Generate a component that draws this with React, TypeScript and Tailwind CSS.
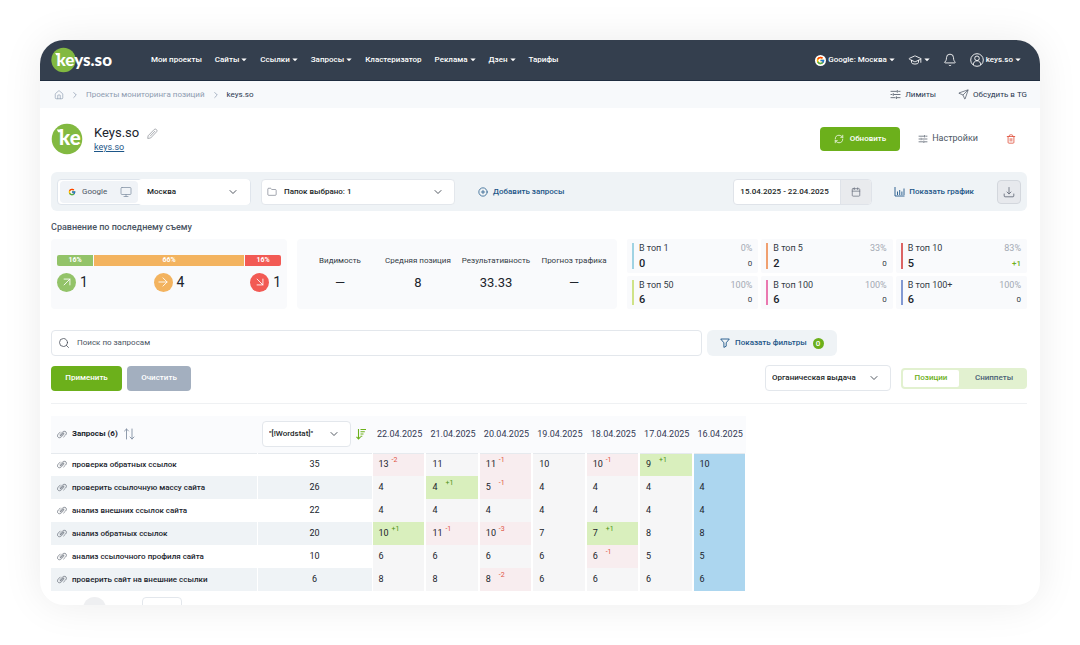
import type { ReactNode } from "react";
import { FcGoogle } from "react-icons/fc";
import {
  ArrowDownRight,
  ArrowRight,
  ArrowUpRight,
  Bell,
  Calendar,
  ChevronDown,
  ChevronRight,
  CirclePlus,
  Folder,
  GraduationCap,
  Home,
  Monitor,
  RefreshCw,
  Search,
  Send,
  Trash2,
} from "lucide-react";

const navItems = [
  { label: "Мои проекты", menu: false },
  { label: "Сайты", menu: true },
  { label: "Ссылки", menu: true },
  { label: "Запросы", menu: true },
  { label: "Кластеризатор", menu: false },
  { label: "Реклама", menu: true },
  { label: "Дзен", menu: true },
  { label: "Тарифы", menu: false },
];

const metrics = [
  { label: "Видимость", value: "—" },
  { label: "Средняя позиция", value: "8" },
  { label: "Результативность", value: "33.33" },
  { label: "Прогноз трафика", value: "—" },
];

const tops = [
  { label: "В топ 1", value: 0, percent: "0%", diff: "0", color: "bg-[#9fd3e3]" },
  { label: "В топ 5", value: 2, percent: "33%", diff: "0", color: "bg-[#f0a070]" },
  { label: "В топ 10", value: 5, percent: "83%", diff: "+1", color: "bg-[#dc6464]" },
  { label: "В топ 50", value: 6, percent: "100%", diff: "0", color: "bg-[#cfe388]" },
  { label: "В топ 100", value: 6, percent: "100%", diff: "0", color: "bg-[#ea78b0]" },
  { label: "В топ 100+", value: 6, percent: "100%", diff: "0", color: "bg-[#8299d3]" },
];

const dates = ["22.04.2025", "21.04.2025", "20.04.2025", "19.04.2025", "18.04.2025", "17.04.2025", "16.04.2025"];

type Cell = [number, number?];

const rows: { query: string; freq: number; cells: Cell[] }[] = [
  { query: "проверка обратных ссылок", freq: 35, cells: [[13, -2], [11], [11, -1], [10], [10, -1], [9, 1], [10]] },
  { query: "проверить ссылочную массу сайта", freq: 26, cells: [[4], [4, 1], [5, -1], [4], [4], [4], [4]] },
  { query: "анализ внешних ссылок сайта", freq: 22, cells: [[4], [4], [4], [4], [4], [4], [4]] },
  { query: "анализ обратных ссылок", freq: 20, cells: [[10, 1], [11, -1], [10, -3], [7], [7, 1], [8], [8]] },
  { query: "анализ ссылочного профиля сайта", freq: 10, cells: [[6], [6], [6], [6], [6, -1], [5], [5]] },
  { query: "проверить сайт на внешние ссылки", freq: 6, cells: [[8], [8], [8, -2], [6], [6], [6], [6]] },
];

function cellColor([, diff]: Cell, last: boolean) {
  if (last) return "bg-[#acd6ef]";
  if (!diff) return "bg-[#f6f6f7]";
  return diff > 0 ? "bg-[#d9efbd]" : "bg-[#f8edef]";
}

function Caret() {
  return (
    <svg viewBox="0 0 6 4" className="h-1 w-1.5 shrink-0" fill="currentColor">
      <path d="M0.3 0.5h5.4L3 3.3z" />
    </svg>
  );
}

function Sliders({ className }: { className: string }) {
  return (
    <svg viewBox="0 0 12 10" className={className} fill="none" stroke="currentColor" strokeWidth="0.9">
      <path d="M0.5 1.5h7M9 1.5h2.5M0.5 5h2M4 5h7.5M0.5 8.5h5.5M7.5 8.5h4" />
      <path d="M8 0v3M3.5 3.5v3M7 7v3" />
    </svg>
  );
}

function ClipIcon() {
  return (
    <svg viewBox="0 0 12 10" className="h-[9px] w-2.5 shrink-0" fill="none" stroke="#5c6470" strokeWidth="0.8" strokeLinecap="round">
      <path d="M7.6 3.1L5 5.9c-.9 1-2 .1-1.2-.8l2.7-3C8.6.2 11.2 1.1 11.3 3.4c0 .9-.4 1.5-1 2.2L8 7.9" />
      <path d="M4.3 6.8l2.7-2.9c.9-1 2-.1 1.2.8l-2.8 3C3.3 9.8.7 8.9.6 6.6c0-.9.4-1.5 1-2.2L3.9 2.1" />
    </svg>
  );
}

function LogoMark() {
  return (
    <svg viewBox="0 0 32 32" className="h-8 w-8 shrink-0" role="img" aria-label="Keys.so">
      <defs>
        <clipPath id="mark">
          <circle cx="16" cy="16" r="15.3" />
        </clipPath>
      </defs>
      <circle cx="16" cy="16" r="15.3" fill="#82b941" />
      <g clipPath="url(#mark)" fill="#fff">
        <path d="M5.8 6.4h5v2.800H7.2z" />
        <text x="8" y="21.500" fontFamily="Lato, sans-serif" fontWeight="900" fontSize="20.500">ke</text>
      </g>
    </svg>
  );
}

function Logo() {
  return (
    <svg viewBox="0 0 64 26" className="h-[26px] w-16 shrink-0" role="img" aria-label="keys.so">
      <circle cx="12.5" cy="13" r="12.2" fill="#82b941" />
      <path d="M4.2 6h4v2.200H5.200z" fill="#fff" />
      <text x="5.500" y="18.500" fill="#fff" fontFamily="Lato, sans-serif" fontWeight="900" fontSize="17">keys.so</text>
    </svg>
  );
}

function Select({ label, value, className }: { label: string; value: string; className: string }) {
  return (
    <div className={`relative flex h-[26px] items-center rounded border border-[#e3e7ec] bg-white ${className}`}>
      <select aria-label={label} className="h-full w-full appearance-none bg-transparent pr-6 text-[8px] font-medium text-[#1b1f27] outline-none">
        <option>{value}</option>
      </select>
      <ChevronDown className="pointer-events-none absolute right-2.5 size-3 text-[#3f4650]" strokeWidth={1.8} />
    </div>
  );
}

function Trend({ value, color, children }: { value: number; color: string; children: ReactNode }) {
  return (
    <div className="flex items-center gap-1 text-sm text-[#20242c]">
      <span className={`flex size-[19px] items-center justify-center rounded-full text-white ${color}`}>{children}</span>
      {value}
    </div>
  );
}

function Header() {
  return (
    <header className="flex h-[41px] items-center border-b border-[#1f2d3f] bg-[#343f4e] pr-[19px] pl-[11px] text-[8px] font-medium text-white">
      <Logo />
      <nav className="ml-9 flex items-center gap-[13px]">
        {navItems.map((item) => (
          <a key={item.label} href="#" className="flex items-center gap-0.5 whitespace-nowrap">
            {item.label}
            {item.menu && <Caret />}
          </a>
        ))}
      </nav>
      <div className="ml-auto flex items-center gap-[13px]">
        <button className="flex items-center gap-0.5 whitespace-nowrap">
          <span className="rounded-full bg-white p-px">
            <FcGoogle className="size-[9px]" />
          </span>
          Google: Москва
          <Caret />
        </button>
        <button aria-label="Обучение" className="flex items-center gap-0.5">
          <GraduationCap className="size-3.5" strokeWidth={1.5} />
          <Caret />
        </button>
        <button aria-label="Уведомления">
          <Bell className="size-3.5" strokeWidth={1.5} />
        </button>
        <button className="flex items-center gap-0.5">
          <svg viewBox="0 0 14 14" className="size-3.5" fill="none" stroke="currentColor" strokeWidth="0.9">
            <circle cx="7" cy="7" r="6.3" />
            <circle cx="7" cy="5.3" r="2.3" />
            <path d="M3.3 12c0-2.7 1.5-4.2 3.7-4.2s3.7 1.5 3.7 4.2" />
          </svg>
          keys.so
          <Caret />
        </button>
      </div>
    </header>
  );
}

function Breadcrumbs() {
  return (
    <div className="flex h-[27px] items-center bg-[#f7f9fb] pr-[13px] pl-3.5 text-[8px]">
      <nav className="flex items-center gap-1.5 text-[#8d9bb0]">
        <a href="#" aria-label="Главная">
          <Home className="size-2.5" strokeWidth={1.6} />
        </a>
        <ChevronRight className="size-2.5" strokeWidth={1.8} />
        <a href="#">Проекты мониторинга позиций</a>
        <ChevronRight className="size-2.5" strokeWidth={1.8} />
        <span className="text-[#2a3850]">keys.so</span>
      </nav>
      <div className="ml-auto flex items-center gap-[22px] text-[#2a3850]">
        <a href="#" className="flex items-center gap-1">
          <Sliders className="h-[9px] w-[11px] text-[#4b5563]" />
          Лимиты
        </a>
        <a href="#" className="flex items-center gap-1">
          <Send className="size-[11px] text-[#4b5563]" strokeWidth={1.6} />
          Обсудить в TG
        </a>
      </div>
    </div>
  );
}

function Title() {
  return (
    <div className="flex h-16 items-center pr-2 pb-0.5 pl-[11px]">
      <LogoMark />
      <div className="ml-[11px]">
        <div className="flex items-center gap-2">
          <h1 className="text-[13px] leading-4 text-[#20242c]">Keys.so</h1>
          <button aria-label="Переименовать">
            <svg viewBox="0 0 12 12" className="size-[11px] text-[#8b8f96]" fill="none" stroke="currentColor" strokeWidth="0.8" strokeLinejoin="round">
              <path d="M1.2 8.5l6.8-7c1.3-1.2 3.9 1 2.6 2.5L4 10.9l-3.2.5zM3.3 9l5.5-5.7" />
            </svg>
          </button>
        </div>
        <a href="#" className="block text-[9px] leading-3 text-[#1d5688] underline">keys.so</a>
      </div>
      <div className="ml-auto flex items-center text-[9px]">
        <button className="flex h-6 items-center gap-1.5 rounded bg-[#6cb01b] px-3.5 text-[8px] font-medium text-white">
          <RefreshCw className="size-2.5" strokeWidth={1.8} />
          Обновить
        </button>
        <button className="ml-[18px] flex items-center gap-1 text-[#4b5563]">
          <Sliders className="h-2 w-2.5" />
          Настройки
        </button>
        <button aria-label="Удалить" className="mr-4 ml-7">
          <Trash2 className="size-2.5 text-[#e0533f]" strokeWidth={2} />
        </button>
      </div>
    </div>
  );
}

function Toolbar() {
  return (
    <div className="flex h-[39px] items-center rounded-md bg-[#eff3f6] px-1.5 text-[8px]">
      <div className="flex h-[26px] w-[194px] items-center rounded border border-[#dfe5ec] bg-white pl-0.5">
        <span className="flex h-[22px] w-[78px] items-center rounded bg-[#f0f3f7] pr-1.5 pl-2 text-[#4b5563]">
          <FcGoogle className="size-2" />
          <span className="ml-1.5">Google</span>
          <Monitor className="ml-auto size-3 text-[#8290a3]" strokeWidth={1.5} />
        </span>
        <Select label="Регион" value="Москва" className="flex-1 border-transparent bg-transparent pl-2" />
      </div>
      <div className="relative ml-2.5 w-[194px]">
        <Folder className="pointer-events-none absolute top-2 left-1.5 z-10 size-2.5 text-[#6b7280]" strokeWidth={1.5} />
        <Select label="Папки" value="Папок выбрано: 1" className="pl-[22px]" />
      </div>
      <button className="ml-[23px] flex items-center gap-[5px] font-medium text-[#1d5688]">
        <CirclePlus className="size-2.5" strokeWidth={1.8} />
        Добавить запросы
      </button>
      <div className="ml-auto flex h-[26px] w-[139px] overflow-hidden rounded border border-[#dfe3e9] bg-white">
        <input aria-label="Период" defaultValue="15.04.2025 - 22.04.2025" className="w-[106px] pl-1.5 font-medium text-[#1b1f27] outline-none" />
        <button aria-label="Открыть календарь" className="flex flex-1 items-center justify-center border-l border-[#dfe3e9] bg-[#e9ebee] text-[#6b7280]">
          <Calendar className="size-2.5" strokeWidth={1.8} />
        </button>
      </div>
      <button className="ml-[22px] flex items-center gap-1 font-medium text-[#1d5688]">
        <svg viewBox="0 0 11 11" className="size-[11px]" fill="none" stroke="currentColor" strokeWidth="0.9">
          <path d="M1 1v9h9.5M3.5 9V5.5M5.7 9V4M7.9 9V5.5M10 9V2.5" />
        </svg>
        Показать график
      </button>
      <button aria-label="Скачать" className="ml-[23px] flex size-6 items-center justify-center rounded border border-[#d3d7dd] bg-[#e7e9ed] text-[#6b7280]">
        <svg viewBox="0 0 12 12" className="size-3" fill="none" stroke="currentColor" strokeWidth="0.9" strokeLinecap="round" strokeLinejoin="round">
          <path d="M6 1.5v6.3M4 6l2 2 2-2M1.2 8v2c0 .5.3.8.8.8h8c.5 0 .8-.3.8-.8V8" />
        </svg>
      </button>
    </div>
  );
}

function Summary() {
  return (
    <section>
      <h2 className="pt-2.5 pb-[5px] text-[9px] leading-[13px] font-medium text-[#4b5563]">Сравнение по последнему съему</h2>
      <div className="flex h-[70px] gap-2.5">
        <div className="w-[236px] rounded bg-[#f9fafc] px-1.5 pt-4">
          <div className="flex h-[11px] gap-px text-center text-[7px] leading-[11px] font-bold text-white">
            <span className="w-9 rounded-l-xs bg-[#93c369]">16%</span>
            <span className="flex-1 bg-[#f3b35f]">66%</span>
            <span className="w-9 rounded-r-xs bg-[#f25a54]">16%</span>
          </div>
          <div className="mt-1.5 flex justify-between">
            <Trend value={1} color="bg-[#93c369]">
              <ArrowUpRight className="size-3.5" strokeWidth={1.5} />
            </Trend>
            <Trend value={4} color="bg-[#f3b35f]">
              <ArrowRight className="size-3.5" strokeWidth={1.5} />
            </Trend>
            <Trend value={1} color="bg-[#f25a54]">
              <ArrowDownRight className="size-3.5" strokeWidth={1.5} />
            </Trend>
          </div>
        </div>
        <dl className="grid w-80 grid-cols-4 rounded bg-[#f9fafc] px-1 pt-4 text-center">
          {metrics.map((m) => (
            <div key={m.label} className="whitespace-nowrap">
              <dt className="text-[8px] leading-3 text-[#333a45]">{m.label}</dt>
              <dd className="mt-1.5 text-[13px] leading-5 text-[#20242c]">{m.value}</dd>
            </div>
          ))}
        </dl>
        <div className="grid flex-1 grid-cols-3 grid-rows-2 gap-[3px]">
          {tops.map((t) => (
            <div key={t.label} className="flex gap-[5px] rounded-xs bg-[#f9fafc] py-1 pr-1.5 pl-[5px]">
              <span className={`w-0.5 ${t.color}`} />
              <div className="flex flex-1 flex-col justify-between text-[9px] leading-[10px] text-[#333a45]">
                <div className="flex justify-between">
                  {t.label}
                  <span className="text-[#a3a9b3]">{t.percent}</span>
                </div>
                <div className="flex items-end justify-between">
                  <b className="text-[11px] font-medium text-[#20242c]">{t.value}</b>
                  <span className={t.diff === "0" ? "text-[8px]" : "text-[8px] font-medium text-[#6cb01b]"}>{t.diff}</span>
                </div>
              </div>
            </div>
          ))}
        </div>
      </div>
    </section>
  );
}

function Filters() {
  return (
    <form className="border-b border-[#eff1f3] pt-[21px] pb-3 text-[8px]">
      <div className="flex gap-[5px]">
        <label className="flex h-[26px] w-[651px] items-center rounded border border-[#e3e7ec] pl-1.5">
          <Search className="size-3 text-[#3f4650]" strokeWidth={1.5} />
          <input aria-label="Поиск" placeholder="Поиск по запросам" className="ml-[7px] flex-1 outline-none placeholder:text-[#4b5563]" />
        </label>
        <button type="button" className="flex h-[26px] items-center rounded-md bg-[#eff3f6] px-[13px] font-medium text-[#1d5688]">
          <svg viewBox="0 0 10 10" className="size-2.5" fill="none" stroke="currentColor" strokeWidth="0.9" strokeLinejoin="round">
            <path d="M0.7 1h8.6L6.2 4.8v3.4L3.9 9.4V4.8z" />
          </svg>
          <span className="ml-[5px]">Показать фильтры</span>
          <span className="ml-1.5 size-[11px] rounded-full bg-[#6cb01b] text-center leading-[11px] text-white">0</span>
        </button>
      </div>
      <div className="mt-[9px] flex items-center">
        <button type="button" className="h-[25px] w-[71px] rounded bg-[#6cb01b] font-medium text-white">Применить</button>
        <button type="button" className="ml-[5px] h-[25px] w-16 rounded bg-[#a3afbf] font-medium text-white">Очистить</button>
        <Select label="Тип выдачи" value="Органическая выдача" className="ml-auto w-[126px] pl-1.5" />
        <div className="ml-2.5 flex h-[21px] w-[126px] rounded bg-[#e2f1d0] p-0.5">
          <button type="button" className="w-[56px] rounded-xs bg-white font-medium text-[#6cb01b]">Позиции</button>
          <button type="button" className="flex-1 pl-1 font-medium text-[#4b5f76]">Сниппеты</button>
        </div>
      </div>
    </form>
  );
}

function Positions() {
  return (
    <table className="mt-3 w-[696px] table-fixed border-collapse text-[9px] text-[#20242c]">
      <thead>
        <tr className="h-[37px] border-b border-[#e6eaee] bg-[#fafbfd] text-left">
          <th className="w-[206px] text-[8px] font-bold">
            <span className="flex items-center gap-[5px] pl-1.5">
              <ClipIcon />
              Запросы (6)
              <svg viewBox="0 0 12 12" className="h-3 w-3" fill="none" stroke="#8290a3" strokeWidth="0.9" strokeLinecap="round">
                <path d="M3.5 11V1M1.5 3l2-2 2 2M9 1v10M7 9l2 2 2-2" />
              </svg>
            </span>
          </th>
          <th className="w-[115px]">
            <span className="flex items-center gap-[5px] pl-[5px]">
              <Select label="Частотность" value={'"[!Wordstat]"'} className="w-[89px] pl-1.5" />
              <svg viewBox="0 0 10 12" className="h-3 w-2.5" fill="none" stroke="#6cb01b" strokeWidth="1.1">
                <path d="M2.5 1v10M0.5 8.8l2 2.2 2-2.2M4.5 1.5H10M4.5 3.8h4.3M4.5 6h3M4.5 8.2h1.8" />
              </svg>
            </span>
          </th>
          {dates.map((date) => (
            <th key={date} className="pl-[5px] font-normal text-[#333a55]">{date}</th>
          ))}
        </tr>
      </thead>
      <tbody>
        {rows.map((row) => (
          <tr key={row.query} className="h-[23px] even:bg-[#eff3f6]">
            <td className="border-r border-white text-[8px] font-medium">
              <a href="#" className="flex items-center gap-[5px] pl-1.5 whitespace-nowrap">
                <ClipIcon />
                {row.query}
              </a>
            </td>
            <td className="border-r border-white text-center">{row.freq}</td>
            {row.cells.map((cell, i) => (
              <td key={dates[i]} className={`border-r-2 border-white pl-1.5 ${cellColor(cell, i === dates.length - 1)}`}>
                <span className="flex items-center">
                  <span className="w-[13px]">{cell[0]}</span>
                  {cell[1] && (
                    <span className={`pb-2.5 text-[7px] leading-[8px] ${cell[1] > 0 ? "text-[#4c8f14]" : "text-[#e0533f]"}`}>
                      {cell[1] > 0 ? `+${cell[1]}` : cell[1]}
                    </span>
                  )}
                </span>
              </td>
            ))}
          </tr>
        ))}
      </tbody>
    </table>
  );
}

export default function App() {
  return (
    <div className="h-screen bg-white p-10 font-[Roboto,sans-serif]">
      <main className="h-full overflow-hidden rounded-3xl bg-white shadow-[0_0_40px_rgba(0,0,0,0.08)]">
        <Header />
        <Breadcrumbs />
        <Title />
        <div className="pr-[13px] pl-[11px]">
          <Toolbar />
          <Summary />
          <Filters />
          <Positions />
          <div className="mt-1.5 flex gap-9 pl-8">
            <button aria-label="Страница" className="size-[23px] rounded-full bg-[#eeeff1]" />
            <select aria-label="Строк на странице" className="h-6 w-10 appearance-none rounded border border-[#e3e7ec] bg-white" />
          </div>
        </div>
      </main>
    </div>
  );
}
